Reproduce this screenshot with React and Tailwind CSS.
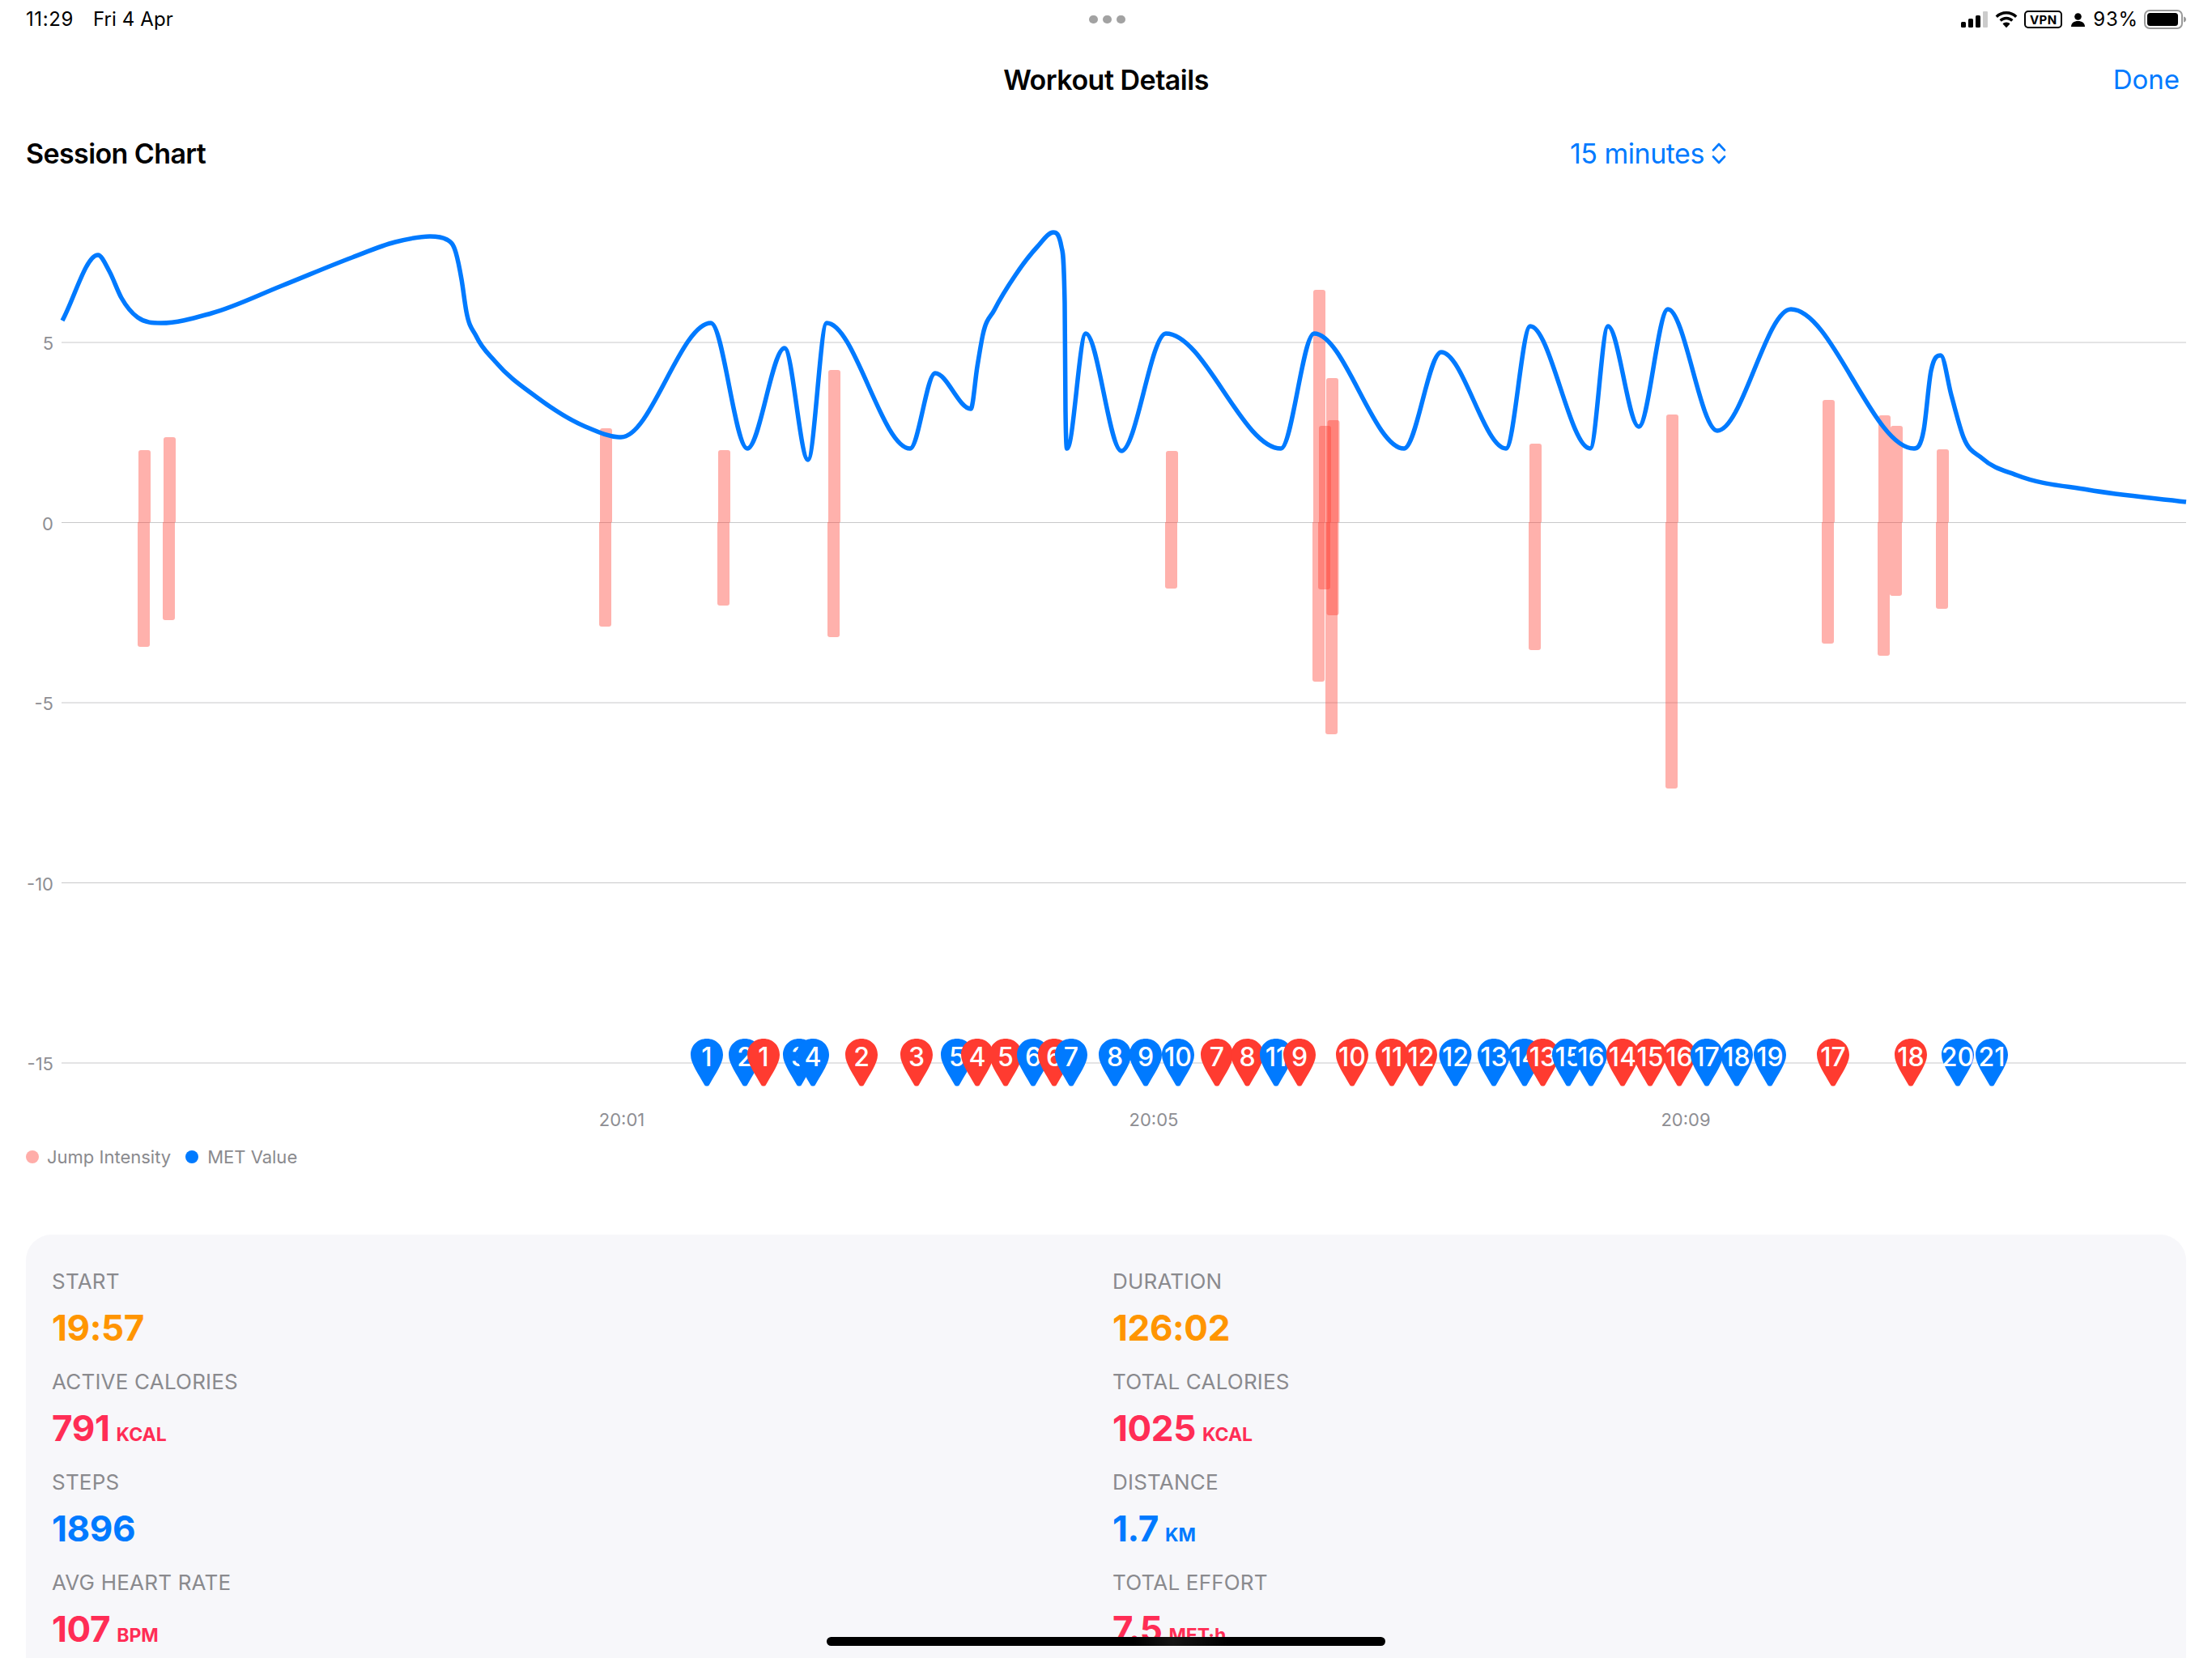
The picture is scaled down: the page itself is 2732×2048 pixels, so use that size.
const METS = [
  [77, 396], [121, 315], [135, 335], [150, 368], [170, 392], [199, 399], [261, 387], [348, 353], [435, 318], [488, 299],
  [531, 292], [552, 296], [563, 312], [570, 345], [576, 385], [588, 415], [612, 447], [662, 490], [723, 527], [767, 540], [878, 399],
  [923, 554], [969, 430], [998, 568], [1021, 399], [1124, 554], [1155, 461], [1199, 505], [1207, 453], [1214, 413],
  [1228, 383], [1254, 340], [1281, 305], [1301, 287], [1311, 305], [1315, 374], [1316, 508], [1318, 554], [1341, 412], [1385, 557],
  [1440, 412], [1582, 554], [1623, 412], [1734, 554], [1780, 435], [1860, 554], [1890, 403], [1964, 554], [1986, 403],
  [2024, 527], [2060, 382], [2121, 532], [2212, 382], [2364, 554], [2376, 531], [2385, 458], [2397, 439], [2410, 488],
  [2425, 540], [2448, 566], [2491, 587], [2579, 605], [2700, 620],
];

// x, top, bottom
const JUMPS = [
  [178, 556, 799], [209, 540, 766], [748, 529, 774], [894, 556, 748], [1030, 457, 787], [1447, 557, 727],
  [1629, 358, 842], [1636, 526, 728], [1645, 467, 907], [1646.5, 519, 760], [1896, 548, 803], [2065, 512, 974],
  [2258, 494, 795], [2327, 513, 810], [2342, 526, 736], [2399, 555, 752],
];

const PINS = [
  [873, 1, "b"], [920, 2, "b"], [943, 1, "r"], [987, 3, "b"], [1004, 4, "b"], [1064, 2, "r"], [1132, 3, "r"],
  [1182, 5, "b"], [1207, 4, "r"], [1242, 5, "r"], [1276, 6, "b"], [1302, 6, "r"], [1323, 7, "b"], [1377, 8, "b"],
  [1415, 9, "b"], [1455, 10, "b"], [1503, 7, "r"], [1540.5, 8, "r"], [1576, 11, "b"], [1605, 9, "r"], [1670, 10, "r"],
  [1719, 11, "r"], [1755, 12, "r"], [1797.5, 12, "b"], [1845, 13, "b"], [1883, 14, "b"], [1905.5, 13, "r"],
  [1937, 15, "b"], [1965, 16, "b"], [2004, 14, "r"], [2038, 15, "r"], [2074, 16, "r"], [2108, 17, "b"],
  [2145, 18, "b"], [2186, 19, "b"], [2264, 17, "r"], [2360, 18, "r"], [2418, 20, "b"], [2460, 21, "b"],
];

const GRID = [
  { y: 423, label: "5" },
  { y: 645.5, label: "0" },
  { y: 868, label: "-5" },
  { y: 1090.5, label: "-10" },
  { y: 1313, label: "-15" },
];

const TIMES = [
  { x: 768, label: "20:01" },
  { x: 1425, label: "20:05" },
  { x: 2082, label: "20:09" },
];

const STATS = [
  { label: "START", value: "19:57", color: "text-[#ff9500]" },
  { label: "DURATION", value: "126:02", color: "text-[#ff9500]" },
  { label: "ACTIVE CALORIES", value: "791", unit: "KCAL", color: "text-[#ff2d55]" },
  { label: "TOTAL CALORIES", value: "1025", unit: "KCAL", color: "text-[#ff2d55]" },
  { label: "STEPS", value: "1896", color: "text-[#007aff]" },
  { label: "DISTANCE", value: "1.7", unit: "KM", color: "text-[#007aff]" },
  { label: "AVG HEART RATE", value: "107", unit: "BPM", color: "text-[#ff2d55]" },
  { label: "TOTAL EFFORT", value: "7.5", unit: "MET·h", color: "text-[#ff2d55]" },
];

// monotone cubic through the points, flat at every peak and trough
function smoothPath(pts) {
  const slopes = pts.slice(1).map((p, i) => (p[1] - pts[i][1]) / (p[0] - pts[i][0]));
  const tangents = pts.map((p, i) => {
    if (i === 0) return slopes[0];
    if (i === pts.length - 1) return slopes[i - 1];
    const a = slopes[i - 1];
    const b = slopes[i];
    if (a * b <= 0) return 0;
    const h0 = p[0] - pts[i - 1][0];
    const h1 = pts[i + 1][0] - p[0];
    const t = (a * h1 + b * h0) / (h0 + h1);
    return Math.sign(t) * Math.min(Math.abs(t), 3 * Math.abs(a), 3 * Math.abs(b));
  });
  let d = `M${pts[0][0]} ${pts[0][1]}`;
  for (let i = 0; i < pts.length - 1; i++) {
    const [x0, y0] = pts[i];
    const [x1, y1] = pts[i + 1];
    const h = (x1 - x0) / 3;
    d += ` C${x0 + h} ${y0 + tangents[i] * h} ${x1 - h} ${y1 - tangents[i + 1] * h} ${x1} ${y1}`;
  }
  return d;
}

// bar with only its far end rounded, so the two halves meet flat on the zero line
function barPath(x, from, to) {
  const w = 15;
  const r = from < to ? 3 : -3;
  return `M${x} ${to} V${from + r} Q${x} ${from} ${x + 3} ${from} H${x + w - 3} Q${x + w} ${from} ${x + w} ${from + r} V${to} Z`;
}

function StatusBar() {
  return (
    <div className="h-12 px-8 flex items-center justify-between relative text-black">
      <div className="flex gap-[24px] text-[24px] leading-none">
        <span className="tracking-[0.6px]">11:29</span>
        <span className="tracking-[0.1px]">Fri 4 Apr</span>
      </div>
      <div className="absolute left-[1345px] top-[19px] flex gap-[6px]">
        <span className="w-[11px] h-[10px] rounded-full bg-[#a2a2a2]" />
        <span className="w-[11px] h-[10px] rounded-full bg-[#a2a2a2]" />
        <span className="w-[11px] h-[10px] rounded-full bg-[#a2a2a2]" />
      </div>
      <div className="flex items-center mr-[-1px]">
        <svg width="34" height="21" viewBox="0 0 34 21">
          <rect x="0" y="13" width="6" height="7" rx="1.5" fill="#000" />
          <rect x="9" y="9" width="6" height="11" rx="1.5" fill="#000" />
          <rect x="18" y="5" width="6" height="15" rx="1.5" fill="#000" />
          <rect x="27" y="0" width="6" height="20" rx="1" fill="#cccccc" />
        </svg>
        <svg className="ml-[8px]" width="28" height="21" viewBox="0 0 28 21">
          <path d="M14 0C8.800 0 4.100 2 .6 5.400L3 7.900C5.900 5.100 9.700 3.400 14 3.400s8.100 1.700 11 4.500l2.400-2.500C23.900 2 19.200 0 14 0z" fill="#000" />
          <path d="M14 6.800c-3.300 0-6.300 1.300-8.500 3.400l2.400 2.500c1.600-1.500 3.700-2.500 6.100-2.500s4.500 1 6.100 2.500l2.400-2.500c-2.200-2.100-5.200-3.400-8.500-3.400z" fill="#000" />
          <path d="M14 13.600c-1.800 0-3.300.7-4.500 1.800L14 20.200l4.500-4.800c-1.200-1.100-2.700-1.800-4.500-1.800z" fill="#000" />
        </svg>
        <span className="ml-[8px] w-[47px] h-[22px] border-2 border-black rounded-[5px] flex items-center justify-center text-[15px] font-bold leading-none tracking-[0.5px]">
          VPN
        </span>
        <svg className="ml-[11px]" width="17" height="17" viewBox="0 0 17 17">
          <circle cx="8.500" cy="4.500" r="4.300" fill="#000" />
          <path d="M0 17c0-4.500 3.600-7 8.500-7s8.500 2.500 8.500 7z" fill="#000" />
        </svg>
        <span className="ml-[10px] text-[24px] leading-none tracking-[0.8px]">93%</span>
        <svg className="ml-[7px]" width="53" height="24" viewBox="0 0 53 24">
          <rect x="1" y="1" width="46" height="22" rx="6" fill="none" stroke="#9a9a9a" strokeWidth="2" />
          <rect x="4" y="4" width="38" height="16" rx="3.500" fill="#000" />
          <path d="M49 8.500c2 .5 3 1.800 3 3.500s-1 3-3 3.500z" fill="#9a9a9a" />
        </svg>
      </div>
    </div>
  );
}

function Pin({ x, n, kind }) {
  return (
    <g transform={`translate(${x} 1283)`}>
      <path
        d="M0 0C11.500 0 20 8.500 20 20C20 31 10 44 3 57C2 59 -2 59 -3 57C-10 44 -20 31 -20 20C-20 8.500 -11.500 0 0 0Z"
        fill={kind === "b" ? "#007aff" : "#ff3b30"}
      />
      <text x="0" y="34" textAnchor="middle" className="text-[32px] font-medium fill-white">
        {n}
      </text>
    </g>
  );
}

function SessionChart() {
  return (
    <svg className="block w-[2732px] h-[1190px]" viewBox="0 230 2732 1190">
      {GRID.map((g) => (
        <g key={g.label}>
          <line x1="76" x2="2700" y1={g.y} y2={g.y} stroke="#c8c8ca" strokeWidth="1" />
          <text x="66" y={g.y + 9} textAnchor="end" className="text-[22px] fill-[#8e8e93]">
            {g.label}
          </text>
        </g>
      ))}
      {JUMPS.map(([x, top, bottom]) => (
        <g key={x} fill="#ff3b30" fillOpacity="0.4">
          <path d={barPath(x - 7, top, 645)} />
          <path d={barPath(x - 8, bottom, 645)} />
        </g>
      ))}
      <path d={smoothPath(METS)} fill="none" stroke="#007aff" strokeWidth="5.500" strokeLinejoin="round" />
      {PINS.map(([x, n, kind]) => (
        <Pin key={`${kind}${n}`} x={x} n={n} kind={kind} />
      ))}
      {TIMES.map((t) => (
        <text key={t.label} x={t.x} y="1391" textAnchor="middle" className="text-[22px] fill-[#8e8e93]">
          {t.label}
        </text>
      ))}
    </svg>
  );
}

function Stat({ label, value, unit, color }) {
  return (
    <div className="h-[124px]">
      <p className="text-[26px] leading-[32px] text-[#8a8a8e] tracking-[0.2px]">{label}</p>
      <p className={`mt-[15px] flex items-baseline gap-[8px] font-bold leading-[52px] ${color}`}>
        <span className="text-[44px] tracking-[-0.4px]">{value}</span>
        {unit && <span className="text-[23px]">{unit}</span>}
      </p>
    </div>
  );
}

export default function App() {
  return (
    <div className="relative w-[2732px] h-[2048px] overflow-hidden bg-white font-[Inter,sans-serif]">
      <StatusBar />

      <div className="h-[100px] px-8 grid grid-cols-3 items-center text-[34px]">
        <span />
        <span className="text-center font-semibold text-black tracking-[-0.5px]">Workout Details</span>
        <span className="text-right text-[33px] text-[#007aff] mr-[8px] pt-[2px]">Done</span>
      </div>

      <div className="h-[82px] px-8 grid grid-cols-2 items-center text-[34px]">
        <span className="font-semibold text-black tracking-[-0.6px]">Session Chart</span>
        <span className="flex items-center text-[#007aff] pl-[573px] gap-[8px] tracking-[-0.5px]">
          15 minutes
          <svg width="20" height="27" viewBox="0 0 20 27" fill="none" stroke="#007aff" strokeWidth="2.600" strokeLinecap="round" strokeLinejoin="round">
            <path d="M3 9.500 10 2l7 7.500" />
            <path d="M3 17.500 10 25l7-7.500" />
          </svg>
        </span>
      </div>

      <SessionChart />

      <div className="h-[18px] px-8 flex items-center text-[22px] text-[#8a8a8e]">
        <span className="w-4 h-4 rounded-full bg-[#ffada9]" />
        <span className="ml-[10px]">Jump Intensity</span>
        <span className="ml-[18px] w-4 h-4 rounded-full bg-[#007aff]" />
        <span className="ml-[11px]">MET Value</span>
      </div>

      <div className="mt-[87px] mx-8 h-[600px] rounded-[32px] bg-[#f7f7fa] pt-[42px] pl-[32px] grid grid-cols-[1310px_1fr] content-start">
        {STATS.map((s) => (
          <Stat key={s.label} {...s} />
        ))}
      </div>

      <div className="absolute left-[1021px] top-[2022px] w-[690px] h-[11px] rounded-full bg-[linear-gradient(90deg,#000_55%,#151515_62%,#000_72%)]" />
    </div>
  );
}
